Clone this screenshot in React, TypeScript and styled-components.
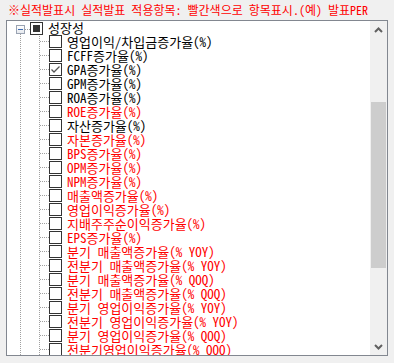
import React from "react";
import styled, { createGlobalStyle } from "styled-components";

const Global = createGlobalStyle`
  html, body { margin: 0; padding: 0; background: #f0f0f0; }
  body { width: 394px; height: 363px; overflow: hidden; }
`;

const FONT = `"Noto Sans Mono CJK KR", "Noto Sans CJK KR", "Liberation Mono", monospace`;

const Page = styled.div`
  width: 394px;
  height: 363px;
  display: flex;
  flex-direction: column;
  font-family: ${FONT};
`;

const Title = styled.div`
  height: 20px;
  line-height: 20px;
  font-size: 12px;
  padding-left: 8px;
  color: #ff0000;
  white-space: nowrap;
  overflow: hidden;
`;

const Box = styled.div`
  margin-left: 6px;
  width: 380px;
  height: 334px;
  border: 1px solid #828790;
  background: #ffffff;
  display: flex;
  overflow: hidden;
`;

const Tree = styled.div`
  flex: 1;
  display: flex;
  flex-direction: column;
  overflow: hidden;
  font-size: 13px;
`;

const dots = (c = "#a0a0a0") =>
  `repeating-linear-gradient(to bottom, ${c} 0 1px, transparent 1px 2px)`;
const hdots = (c = "#a0a0a0") =>
  `repeating-linear-gradient(to right, ${c} 0 1px, transparent 1px 2px)`;

const RootRow = styled.div`
  height: 14px;
  flex: none;
  display: flex;
  align-items: flex-start;
  padding-left: 9px;
  background-image: ${dots()};
  background-size: 1px 1px;
  background-position: 13px 13px;
  background-repeat: no-repeat;
`;

const Expander = styled.div`
  width: 7px;
  height: 7px;
  margin-top: 4px;
  border: 1px solid #9aa3b2;
  background: linear-gradient(#ffffff, #e6e9ee);
  display: flex;
  align-items: center;
  justify-content: center;
  flex: none;
`;

const Minus = styled.div`
  width: 5px;
  height: 1px;
  background: #3d6bb3;
`;

const RootConnector = styled.div`
  width: 5px;
  height: 1px;
  margin-top: 8px;
  flex: none;
  background-image: ${hdots()};
`;

const ChildRow = styled.div`
  height: 14px;
  flex: none;
  display: flex;
  align-items: flex-start;
`;

const Guides = styled.div`
  width: 42px;
  height: 14px;
  flex: none;
  background-image: ${dots()}, ${dots()}, ${hdots()};
  background-size: 1px 14px, 1px 14px, 9px 1px;
  background-position: 13px 1px, 32px 1px, 33px 6px;
  background-repeat: no-repeat;
`;

const Check = styled.div<{ $root?: boolean }>`
  width: 11px;
  height: 11px;
  flex: none;
  margin-top: ${(p) => (p.$root ? "1px" : "0")};
  border: 1px solid #333333;
  background: #ffffff;
  display: flex;
  align-items: center;
  justify-content: center;
`;

const Partial = styled.div`
  width: 7px;
  height: 7px;
  background: #333333;
`;

const Label = styled.span<{ $red?: boolean }>`
  display: block;
  margin-left: 5px;
  height: 14px;
  line-height: 13px;
  white-space: nowrap;
  color: ${(p) => (p.$red ? "#ff0000" : "#000000")};
`;

const Scrollbar = styled.div`
  width: 17px;
  flex: none;
  background: #f0f0f0;
  display: flex;
  flex-direction: column;
`;

const ArrowBtn = styled.div`
  height: 17px;
  flex: none;
  display: flex;
  align-items: center;
  justify-content: center;
`;

const Track = styled.div`
  flex: 1;
  display: flex;
  flex-direction: column;
`;

const Thumb = styled.div`
  margin-top: 64px;
  margin-left: 1px;
  width: 15px;
  height: 166px;
  background: #cdcdcd;
`;

type Item = { t: string; red?: boolean; checked?: boolean };

const items: Item[] = [
  { t: "영업이익/차입금증가율(%)" },
  { t: "FCFF증가율(%)" },
  { t: "GPA증가율(%)", checked: true },
  { t: "GPM증가율(%)" },
  { t: "ROA증가율(%)" },
  { t: "ROE증가율(%)", red: true },
  { t: "자산증가율(%)" },
  { t: "자본증가율(%)", red: true },
  { t: "BPS증가율(%)", red: true },
  { t: "OPM증가율(%)", red: true },
  { t: "NPM증가율(%)", red: true },
  { t: "매출액증가율(%)", red: true },
  { t: "영업이익증가율(%)", red: true },
  { t: "지배주주순이익증가율(%)", red: true },
  { t: "EPS증가율(%)", red: true },
  { t: "분기 매출액증가율(% YOY)", red: true },
  { t: "전분기 매출액증가율(% YOY)", red: true },
  { t: "분기 매출액증가율(% QOQ)", red: true },
  { t: "전분기 매출액증가율(% QOQ)", red: true },
  { t: "분기 영업이익증가율(% YOY)", red: true },
  { t: "전분기 영업이익증가율(% YOY)", red: true },
  { t: "분기 영업이익증가율(% QOQ)", red: true },
  { t: "전분기영업이익증가율(% QOQ)", red: true },
];

const Chevron = ({ up }: { up?: boolean }) => (
  <svg width="9" height="6" viewBox="0 0 9 6">
    <path
      d={up ? "M1 5 L4.5 1.5 L8 5" : "M1 1 L4.5 4.5 L8 1"}
      fill="none"
      stroke="#606060"
      strokeWidth="2"
    />
  </svg>
);

export default function App() {
  return (
    <Page>
      <Global />
      <Title>※실적발표시 실적발표 적용항목: 빨간색으로 항목표시.(예) 발표PER</Title>
      <Box>
        <Tree>
          <RootRow>
            <Expander>
              <Minus />
            </Expander>
            <RootConnector />
            <Check $root>
              <Partial />
            </Check>
            <Label>성장성</Label>
          </RootRow>
          {items.map((it, i) => (
            <ChildRow key={i}>
              <Guides />
              <Check>
                {it.checked && (
                  <svg width="11" height="11" viewBox="0 0 11 11">
                    <path d="M1.5 5.5 L4 8 L9.5 2.5" fill="none" stroke="#555" strokeWidth="1.3" />
                  </svg>
                )}
              </Check>
              <Label $red={it.red}>{it.t}</Label>
            </ChildRow>
          ))}
        </Tree>
        <Scrollbar>
          <ArrowBtn>
            <Chevron up />
          </ArrowBtn>
          <Track>
            <Thumb />
          </Track>
          <ArrowBtn>
            <Chevron />
          </ArrowBtn>
        </Scrollbar>
      </Box>
    </Page>
  );
}
